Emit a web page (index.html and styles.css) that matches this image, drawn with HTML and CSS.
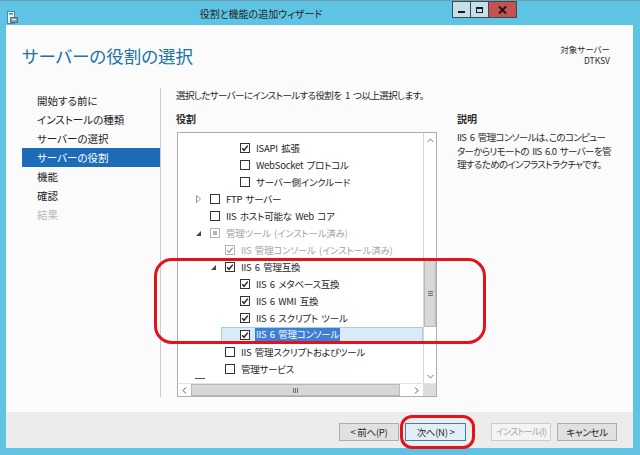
FILE: index.html
```html
<!DOCTYPE html>
<html lang="ja">
<head>
<meta charset="utf-8">
<title>役割と機能の追加ウィザード</title>
<link rel="stylesheet" href="styles.css">
</head>
<body>
<div class="window">
  <div class="titlebar">
    <div class="tb-icon">
      <svg width="11" height="13" viewBox="0 0 11 13"><rect x="0.5" y="0.5" width="7" height="12" fill="#e8f4fb" stroke="#4a88b8"/><rect x="2" y="2" width="4" height="1.5" fill="#4a88b8"/><rect x="3.5" y="6.5" width="7" height="5" fill="#8aa0ae" stroke="#5b6d78"/><rect x="5" y="8" width="4" height="1" fill="#dfe8ee"/></svg>
    </div>
    <div class="tb-title">役割と機能の追加ウィザード</div>
    <div class="tb-buttons">
      <span class="tb-btn tb-min"><span class="glyph-min"></span></span>
      <span class="tb-btn tb-max"><span class="glyph-max"></span></span>
      <span class="tb-btn tb-close"><svg width="9" height="8" viewBox="0 0 9 8"><path d="M1 0.5L8 7.5M8 0.5L1 7.5" stroke="#1a1a1a" stroke-width="2"/></svg></span>
    </div>
    <div class="tb-rest"></div>
  </div>

  <div class="client">
    <div class="header">
      <h1 class="page-title">サーバーの役割の選択</h1>
      <div class="target">
        <div class="target-line">対象サーバー</div>
        <div class="target-line">DTKSV</div>
      </div>
    </div>

    <div class="body">
      <nav class="nav">
        <div class="nav-item">開始する前に</div>
        <div class="nav-item">インストールの種類</div>
        <div class="nav-item">サーバーの選択</div>
        <div class="nav-item active">サーバーの役割</div>
        <div class="nav-item">機能</div>
        <div class="nav-item">確認</div>
        <div class="nav-item disabled">結果</div>
      </nav>

      <div class="main">
        <p class="intro">選択したサーバーにインストールする役割を 1 つ以上選択します。</p>
        <div class="columns">
          <div class="roles">
            <div class="label">役割</div>
            <div class="listbox">
              <div class="list-area">
                <div class="viewport">
                  <div class="row l2"><span class="tri"></span><svg class="cb" viewBox="0 0 10 10"><rect x=".5" y=".5" width="9" height="9" fill="#fff" stroke="#333"/><path d="M2.2 5.2l1.8 2.1 3.8-4.7" fill="none" stroke="#222" stroke-width="1.4"/></svg><span class="txt">ISAPI 拡張</span></div>
                  <div class="row l2"><span class="tri"></span><svg class="cb" viewBox="0 0 10 10"><rect x=".5" y=".5" width="9" height="9" fill="#fff" stroke="#333"/></svg><span class="txt">WebSocket プロトコル</span></div>
                  <div class="row l2"><span class="tri"></span><svg class="cb" viewBox="0 0 10 10"><rect x=".5" y=".5" width="9" height="9" fill="#fff" stroke="#333"/></svg><span class="txt">サーバー側インクルード</span></div>
                  <div class="row l0"><span class="tri"><svg width="7" height="10" viewBox="0 0 7 10"><path d="M1.5 1.5l4 3.5-4 3.5z" fill="none" stroke="#9a9a9a"/></svg></span><svg class="cb" viewBox="0 0 10 10"><rect x=".5" y=".5" width="9" height="9" fill="#fff" stroke="#333"/></svg><span class="txt">FTP サーバー</span></div>
                  <div class="row l0"><span class="tri"></span><svg class="cb" viewBox="0 0 10 10"><rect x=".5" y=".5" width="9" height="9" fill="#fff" stroke="#333"/></svg><span class="txt">IIS ホスト可能な Web コア</span></div>
                  <div class="row l0 dim"><span class="tri"><svg width="7" height="10" viewBox="0 0 7 10"><path d="M6 3v5H1z" fill="#444"/></svg></span><svg class="cb" viewBox="0 0 10 10"><rect x=".5" y=".5" width="9" height="9" fill="#fff" stroke="#b4b4b4"/><rect x="3" y="3" width="4" height="4" fill="#b4b4b4"/></svg><span class="txt">管理ツール (インストール済み)</span></div>
                  <div class="row l1 dim"><span class="tri"></span><svg class="cb" viewBox="0 0 10 10"><rect x=".5" y=".5" width="9" height="9" fill="#fff" stroke="#b4b4b4"/><path d="M2.2 5.2l1.8 2.1 3.8-4.7" fill="none" stroke="#a8a8a8" stroke-width="1.4"/></svg><span class="txt">IIS 管理コンソール (インストール済み)</span></div>
                  <div class="row l1"><span class="tri"><svg width="7" height="10" viewBox="0 0 7 10"><path d="M6 3v5H1z" fill="#444"/></svg></span><svg class="cb" viewBox="0 0 10 10"><rect x=".5" y=".5" width="9" height="9" fill="#fff" stroke="#333"/><path d="M2.2 5.2l1.8 2.1 3.8-4.7" fill="none" stroke="#222" stroke-width="1.4"/></svg><span class="txt">IIS 6 管理互換</span></div>
                  <div class="row l2"><span class="tri"></span><svg class="cb" viewBox="0 0 10 10"><rect x=".5" y=".5" width="9" height="9" fill="#fff" stroke="#333"/><path d="M2.2 5.2l1.8 2.1 3.8-4.7" fill="none" stroke="#222" stroke-width="1.4"/></svg><span class="txt">IIS 6 メタベース互換</span></div>
                  <div class="row l2"><span class="tri"></span><svg class="cb" viewBox="0 0 10 10"><rect x=".5" y=".5" width="9" height="9" fill="#fff" stroke="#333"/><path d="M2.2 5.2l1.8 2.1 3.8-4.7" fill="none" stroke="#222" stroke-width="1.4"/></svg><span class="txt">IIS 6 WMI 互換</span></div>
                  <div class="row l2"><span class="tri"></span><svg class="cb" viewBox="0 0 10 10"><rect x=".5" y=".5" width="9" height="9" fill="#fff" stroke="#333"/><path d="M2.2 5.2l1.8 2.1 3.8-4.7" fill="none" stroke="#222" stroke-width="1.4"/></svg><span class="txt">IIS 6 スクリプト ツール</span></div>
                  <div class="row l2 selected"><span class="tri"></span><svg class="cb" viewBox="0 0 10 10"><rect x=".5" y=".5" width="9" height="9" fill="#fff" stroke="#333"/><path d="M2.2 5.2l1.8 2.1 3.8-4.7" fill="none" stroke="#222" stroke-width="1.4"/></svg><span class="txt sel-text">IIS 6 管理コンソール</span></div>
                  <div class="row l1"><span class="tri"></span><svg class="cb" viewBox="0 0 10 10"><rect x=".5" y=".5" width="9" height="9" fill="#fff" stroke="#333"/></svg><span class="txt">IIS 管理スクリプトおよびツール</span></div>
                  <div class="row l1"><span class="tri"></span><svg class="cb" viewBox="0 0 10 10"><rect x=".5" y=".5" width="9" height="9" fill="#fff" stroke="#333"/></svg><span class="txt">管理サービス</span></div>
                  <div class="row l0 partial"><span class="dash"></span></div>
                </div>
                <div class="vscroll">
                  <div class="arrow"><svg width="7" height="5" viewBox="0 0 7 5"><path d="M0.5 4L3.5 1l3 3" fill="none" stroke="#777"/></svg></div>
                  <div class="vtrack">
                    <div class="vspace"></div>
                    <div class="vthumb"><span class="vgrip"></span></div>
                  </div>
                  <div class="arrow"><svg width="7" height="5" viewBox="0 0 7 5"><path d="M0.5 1L3.5 4l3-3" fill="none" stroke="#777"/></svg></div>
                </div>
              </div>
              <div class="hscroll">
                <div class="harrow"><svg width="5" height="7" viewBox="0 0 5 7"><path d="M4 0.5L1 3.5l3 3" fill="none" stroke="#555"/></svg></div>
                <div class="hthumb"><span class="hgrip"></span></div>
                <div class="hgap"></div>
                <div class="harrow"><svg width="5" height="7" viewBox="0 0 5 7"><path d="M1 0.5L4 3.5l-3 3" fill="none" stroke="#555"/></svg></div>
                <div class="corner"></div>
              </div>
            </div>
          </div>
          <div class="desc">
            <div class="label">説明</div>
            <p class="desc-text">IIS 6 管理コンソールは、このコンピュー<br>ターからリモートの IIS 6.0 サーバーを管<br>理するためのインフラストラクチャです。</p>
          </div>
        </div>
      </div>
    </div>

    <div class="footer">
      <button class="btn">&lt; 前へ(P)</button>
      <button class="btn btn-default">次へ(N) &gt;</button>
      <button class="btn btn-disabled">インストール(I)</button>
      <button class="btn">キャンセル</button>
    </div>
  </div>

  <div class="ring ring-list"></div>
  <div class="ring ring-next"></div>
</div>
</body>
</html>
```

FILE: styles.css
```css
html, body {
  margin: 0;
  padding: 0;
}
body {
  width: 640px;
  height: 455px;
  overflow: hidden;
  font-family: "Noto Sans CJK JP", "Noto Sans", sans-serif;
  font-feature-settings: "palt";
  color: #1e1e1e;
}
.window {
  position: relative;
  width: 640px;
  height: 455px;
  background: #5fc4e3;
  display: flex;
  flex-direction: column;
  box-sizing: border-box;
  border-top: 1px solid #6e9fb0;
}

/* title bar */
.titlebar {
  height: 24px;
  display: flex;
  align-items: flex-start;
  flex-shrink: 0;
}
.tb-icon {
  width: 11px;
  padding: 4px 0 0 7px;
}
.tb-title {
  flex: 1;
  text-align: center;
  padding-left: 51px;
  font-size: 10px;
  line-height: 26px;
  color: #222;
}
.tb-buttons {
  display: flex;
}
.tb-btn {
  height: 17px;
  box-sizing: border-box;
  border: 1px solid #3a4a52;
  display: flex;
  align-items: center;
  justify-content: center;
  background: #c4dfea;
  margin-left: -1px;
}
.tb-min, .tb-max {
  width: 19px;
}
.tb-close {
  width: 29px;
  background: #c75050;
}
.glyph-min {
  width: 7px;
  height: 2px;
  background: #1a1a1a;
  margin-top: 5px;
}
.glyph-max {
  width: 7px;
  height: 6px;
  box-sizing: border-box;
  border: 1px solid #1a1a1a;
  border-top-width: 2px;
}
.tb-rest {
  width: 123px;
}

/* client */
.client {
  margin: 0 7px 7px 6px;
  flex: 1;
  background: #fbfbfb;
  display: flex;
  flex-direction: column;
}
.header {
  height: 60px;
  display: flex;
  justify-content: space-between;
  align-items: flex-start;
  padding: 0 23px 0 16px;
  flex-shrink: 0;
}
.page-title {
  margin: 19px 0 0;
  font-size: 17.5px;
  line-height: 24px;
  font-weight: normal;
  color: #2271a6;
}
.target {
  margin-top: 18px;
  text-align: right;
  font-size: 8.5px;
  color: #2a2a2a;
}
.target-line {
  height: 11px;
  line-height: 12px;
  overflow: visible;
}

.body {
  height: 327px;
  display: flex;
  align-items: flex-start;
  flex-shrink: 0;
}
.nav {
  width: 154px;
  height: 306px;
  margin-top: 3px;
  padding-top: 3px;
  border-right: 1px solid #cbcbcb;
}
.nav-item {
  height: 19px;
  line-height: 19px;
  margin-left: 16px;
  padding-left: 15px;
  font-size: 10.5px;
  color: #1e1e1e;
}
.nav-item.active {
  background: #1c6cb7;
  color: #fff;
}
.nav-item.disabled {
  color: #b9b9b9;
}

.main {
  flex: 1;
  padding: 3px 0 0 15px;
}
.intro {
  margin: 0;
  font-size: 9.5px;
  letter-spacing: -0.6px;
  word-spacing: 2px;
  line-height: 14px;
}
.columns {
  display: flex;
  gap: 20px;
  margin-top: 10px;
}
.roles {
  width: 260px;
  padding-left: 1px;
}
.label {
  font-size: 10px;
  line-height: 14px;
  font-weight: bold;
  color: #2a2a2a;
}
.roles .label {
  margin-left: -1px;
}
.listbox {
  margin-top: 6px;
  width: 260px;
  height: 265px;
  box-sizing: border-box;
  border: 1px solid #abadb3;
  background: #fff;
  display: flex;
  flex-direction: column;
}
.list-area {
  display: flex;
  height: 250px;
}
.viewport {
  width: 245px;
  height: 250px;
  overflow: hidden;
  padding-top: 6px;
  box-sizing: border-box;
}
.row {
  height: 17px;
  display: flex;
  align-items: center;
  font-size: 9.5px;
  letter-spacing: -0.25px;
  word-spacing: 1.5px;
  white-space: nowrap;
}
.row.l0 { margin-left: 17px; }
.row.l1 { margin-left: 32px; }
.row.l2 { margin-left: 47px; }
.tri {
  width: 15px;
  height: 10px;
  flex-shrink: 0;
  display: flex;
}
.cb {
  width: 10px;
  height: 10px;
  flex-shrink: 0;
  margin-right: 6px;
}
.row.dim .txt {
  color: #a3a3a3;
}
.row.selected {
  margin-left: 43px;
  padding-left: 4px;
  height: 16px;
  margin-top: 0.5px;
  margin-bottom: 0.5px;
  background: #d9ebf9;
  box-shadow: inset 0 0 0 1px #a6cdee;
}
.sel-text {
  background: #3c7fd4;
  color: #fff;
  line-height: 13px;
  padding: 0 1px;
  margin-left: -1px;
}
.row.partial {
  align-items: flex-start;
}
.dash {
  width: 10px;
  height: 1px;
  background: #555;
  margin-top: 1px;
}

.vscroll {
  width: 12px;
  border-left: 1px solid #d6d6d6;
  display: flex;
  flex-direction: column;
  background: #fff;
}
.arrow {
  height: 14px;
  display: flex;
  align-items: center;
  justify-content: center;
  flex-shrink: 0;
}
.vtrack {
  flex: 1;
}
.vspace {
  height: 113px;
}
.vthumb {
  height: 67px;
  box-sizing: border-box;
  border: 1px solid #b9b9b9;
  background: #d7d7d7;
  display: flex;
  align-items: center;
  justify-content: center;
}
.vgrip {
  width: 5px;
  height: 5px;
  background: repeating-linear-gradient(#6e6e6e 0 1px, transparent 1px 2px);
}

.hscroll {
  height: 13px;
  display: flex;
  border-top: 1px solid #e2e2e2;
  box-sizing: border-box;
}
.harrow {
  width: 13px;
  display: flex;
  align-items: center;
  justify-content: center;
  background: #fff;
}
.hthumb {
  width: 209px;
  box-sizing: border-box;
  border: 1px solid #b9b9b9;
  background: #d7d7d7;
  display: flex;
  align-items: center;
  justify-content: center;
}
.hgrip {
  width: 5px;
  height: 5px;
  background: repeating-linear-gradient(90deg, #6e6e6e 0 1px, transparent 1px 2px);
}
.hgap {
  flex: 1;
  background: #fff;
}
.corner {
  width: 13px;
  background: #dcdcdc;
}

.desc {
  width: 160px;
}
.desc-text {
  margin: 5px 0 0;
  font-size: 9.5px;
  letter-spacing: -0.65px;
  word-spacing: 2px;
  line-height: 13.5px;
  color: #2a2a2a;
  white-space: nowrap;
}

/* footer */
.footer {
  flex: 1;
  background: #ececec;
  display: flex;
  justify-content: flex-end;
  align-items: flex-start;
  gap: 6px;
  padding: 11px 16px 0 0;
}
.btn {
  width: 60px;
  height: 18px;
  padding: 0;
  box-sizing: border-box;
  border: 1px solid #adadad;
  background: #e1e1e1;
  font-family: inherit;
  font-feature-settings: "palt";
  font-size: 9.5px;
  letter-spacing: -0.3px;
  white-space: nowrap;
  line-height: 16px;
  color: #1e1e1e;
}
.btn-default {
  width: 61px;
  border-color: #3c7fb1;
  background: #e5eef6;
}
.btn-disabled {
  margin-left: 19px;
  background: #f4f4f4;
  border-color: #cccccc;
  color: #a6a6a6;
  font-size: 9px;
  letter-spacing: -0.7px;
}

/* red annotation rings */
.ring {
  position: absolute;
  box-sizing: border-box;
  border: 3px solid #e3131b;
  pointer-events: none;
}
.ring-list {
  left: 154px;
  top: 257px;
  width: 332px;
  height: 86px;
  border-radius: 18px;
}
.ring-next {
  left: 400px;
  top: 414px;
  width: 75px;
  height: 34px;
  border-radius: 12px;
}
```
